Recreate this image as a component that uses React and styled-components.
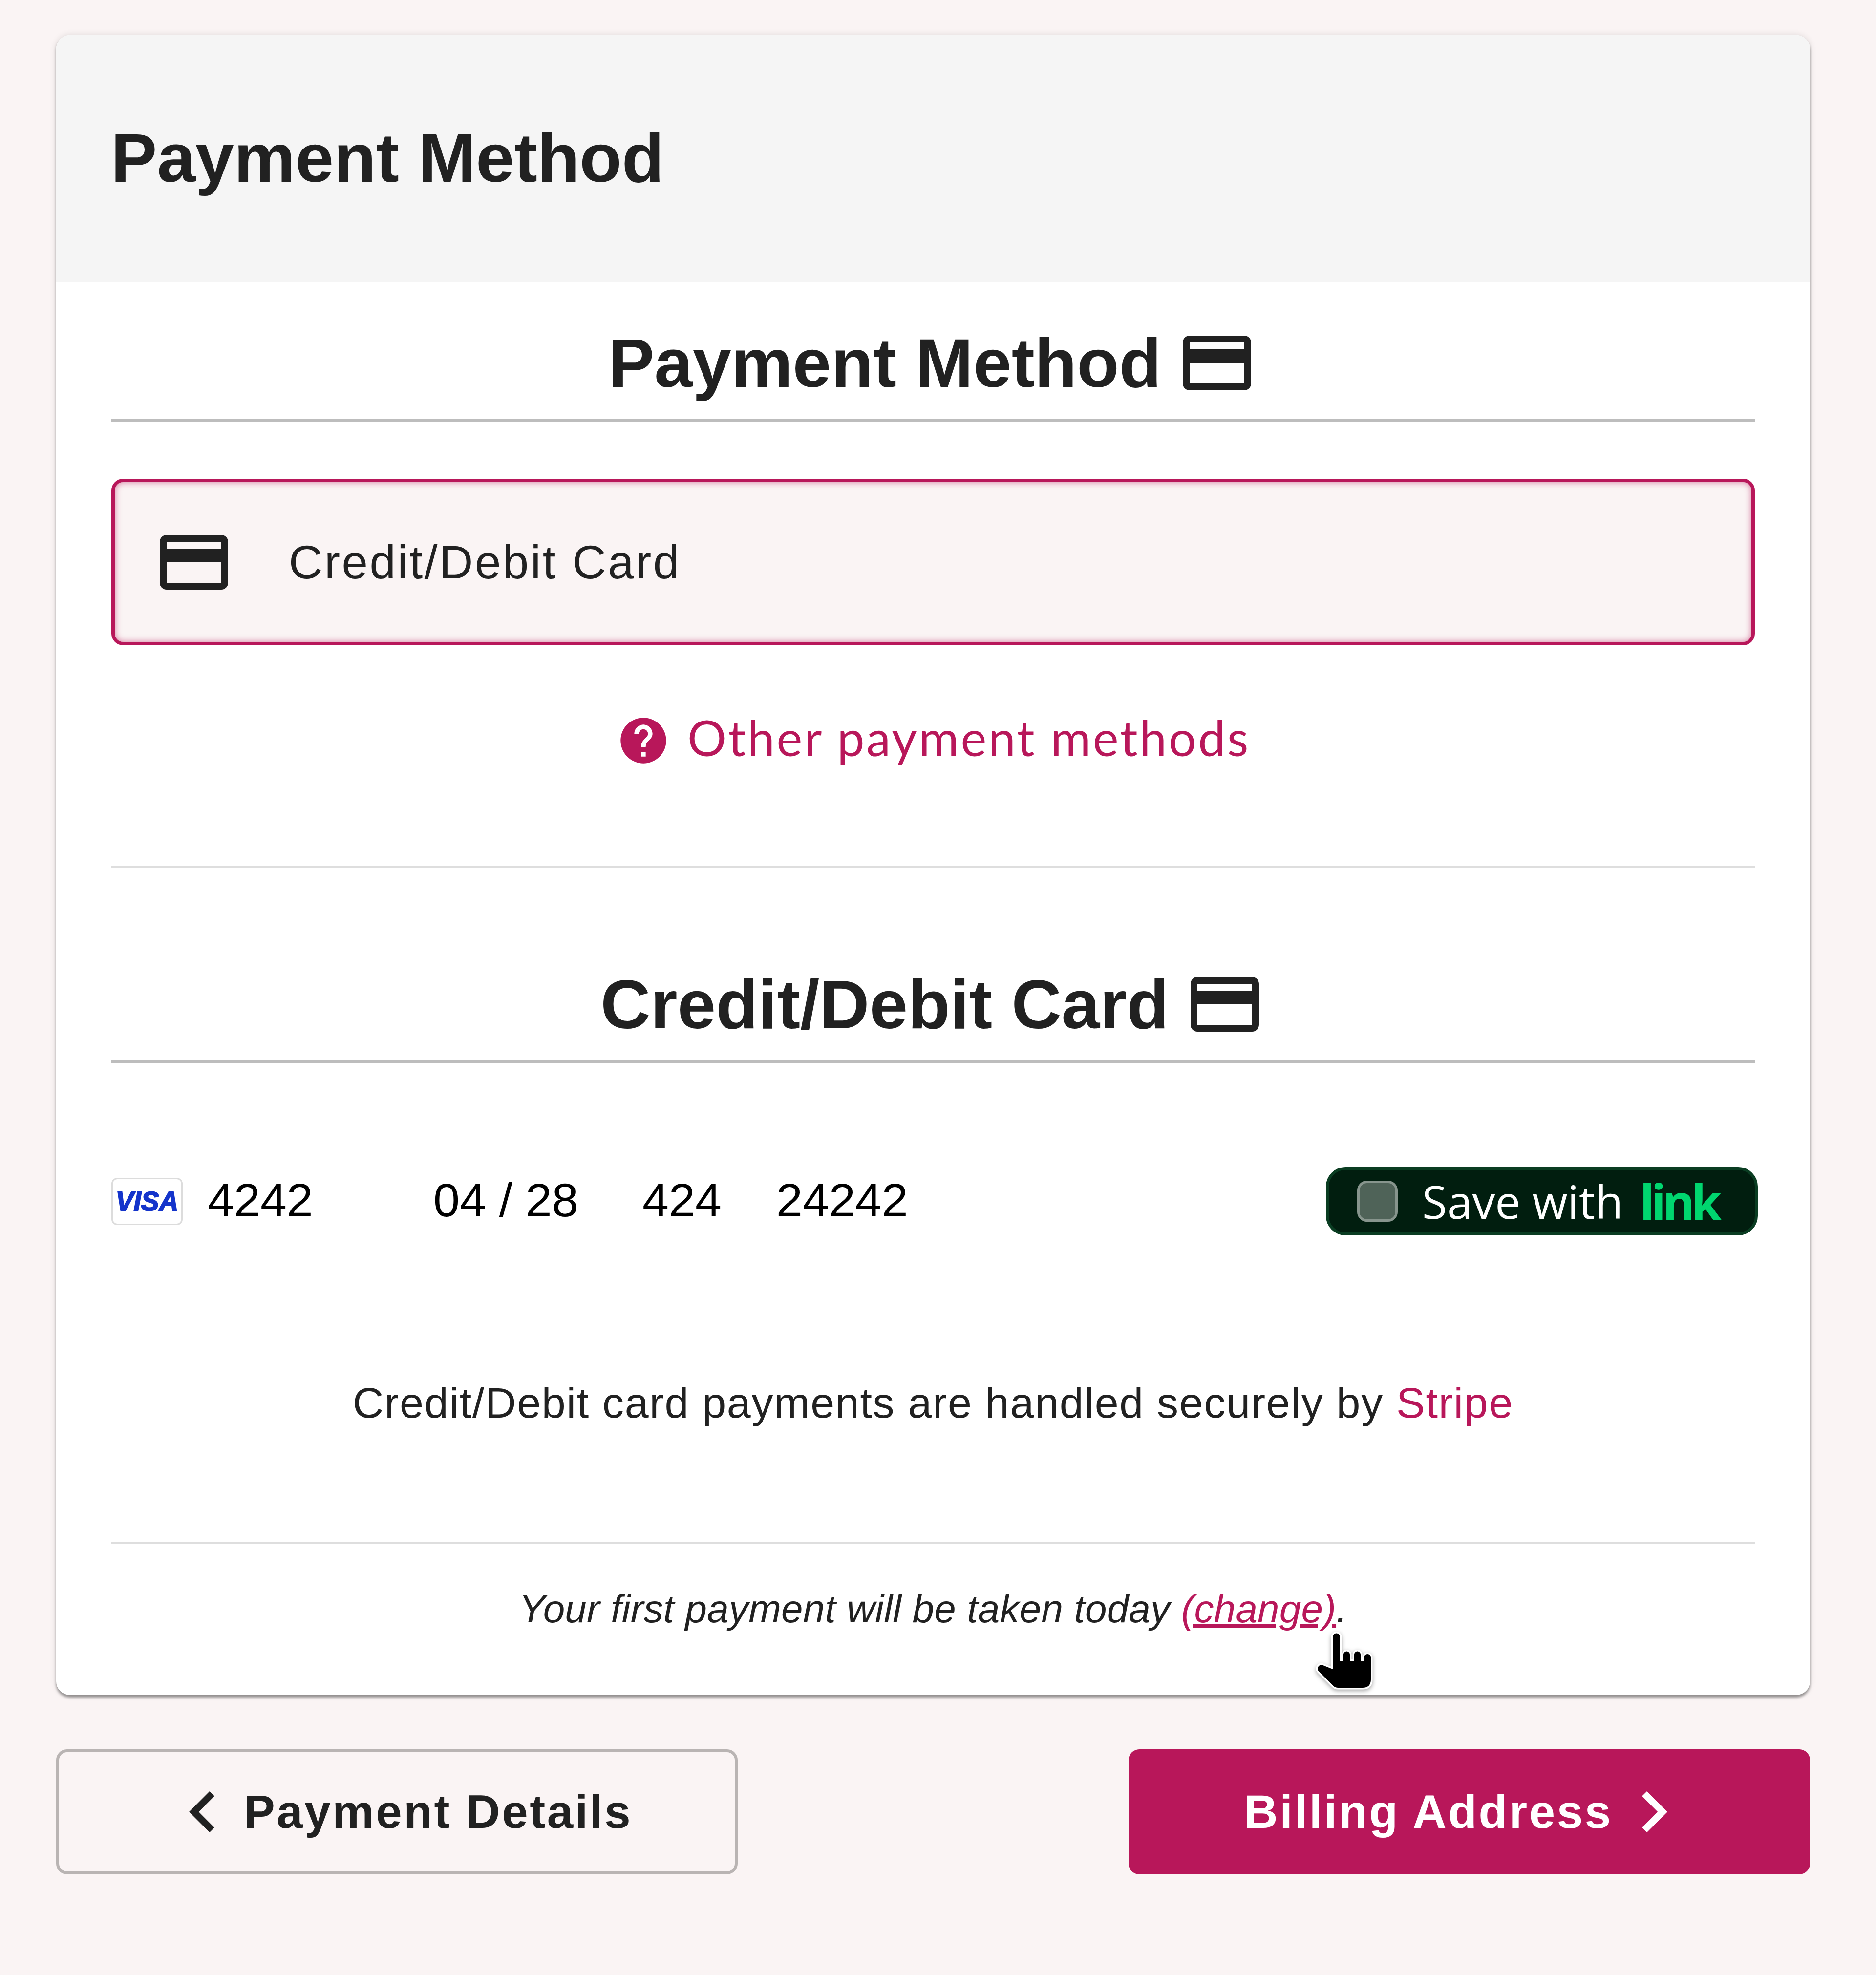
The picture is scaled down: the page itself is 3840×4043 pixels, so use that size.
import React from "react";
import styled, { createGlobalStyle } from "styled-components";

const GlobalStyle = createGlobalStyle`
  body {
    margin: 0;
    background: #faf4f4;
    color: #212121;
    font-family: "Liberation Sans", Arial, sans-serif;
  }
`;

const CARD_PATH =
  "M20 4H4c-1.11 0-1.99.89-1.99 2L2 18c0 1.11.89 2 2 2h16c1.11 0 2-.89 2-2V6c0-1.11-.89-2-2-2zm0 14H4v-6h16v6zm0-10H4V6h16v2z";
const HELP_PATH =
  "M12 2C6.48 2 2 6.48 2 12s4.48 10 10 10 10-4.48 10-10S17.52 2 12 2zm1 17h-2v-2h2v2zm2.07-7.75l-.9.92C13.45 12.9 13 13.5 13 15h-2v-.5c0-1.1.45-2.1 1.17-2.83l1.24-1.26c.37-.36.59-.86.59-1.41 0-1.1-.9-2-2-2s-2 .9-2 2H8c0-2.21 1.79-4 4-4s4 1.79 4 4c0 .88-.36 1.68-.93 2.25z";
const LEFT_PATH = "M15.41 7.41L14 6l-6 6 6 6 1.41-1.41L10.83 12z";
const RIGHT_PATH = "M10 6L8.59 7.41 13.17 12l-4.58 4.59L10 18l6-6z";
const HAND_PATH =
  "M35 74 V8 a7.5 7.5 0 0 1 15 0 V57 H57 V44 a6.5 6.5 0 0 1 13 0 V57 H79 V44 a6.5 6.5 0 0 1 13 0 V57 H99 V50 a7 7 0 0 1 14 0 V95 Q113 112 96 112 H46 Q40 112 36 108 L6 78 Q2 73 6 68 Q10 63 15 66 Z";

const Icon = ({ path, size = 168, color = "currentColor" }) => (
  <svg width={size} height={size} viewBox="0 0 24 24" fill={color} style={{ flexShrink: 0 }}>
    <path d={path} />
  </svg>
);

const App = () => {
  return (
    <Page>
      <GlobalStyle />
      <Card>
        <CardHeader>
          <Title>Payment Method</Title>
        </CardHeader>
        <CardBody>
          <SectionHeading $top={82}>
            Payment Method
            <Icon path={CARD_PATH} />
          </SectionHeading>

          <MethodOption>
            <Icon path={CARD_PATH} />
            <MethodLabel>Credit/Debit Card</MethodLabel>
          </MethodOption>

          <OtherMethods>
            <Icon path={HELP_PATH} size={112} />
            <OtherLabel>Other payment methods</OtherLabel>
          </OtherMethods>

          <Divider $top={200} />

          <SectionHeading $top={195}>
            Credit/Debit Card
            <Icon path={CARD_PATH} />
          </SectionHeading>

          <CardRow>
            <VisaBadge>VISA</VisaBadge>
            <CardField $width={462}>4242</CardField>
            <CardField $width={428}>04 / 28</CardField>
            <CardField $width={274}>424</CardField>
            <CardField>24242</CardField>
            <SaveWithLink>
              <SaveCheck />
              <span>Save with</span>
              <LinkWord>link</LinkWord>
            </SaveWithLink>
          </CardRow>

          <SecureNote>
            Credit/Debit card payments are handled securely by <Accent>Stripe</Accent>
          </SecureNote>

          <Divider $top={224} />

          <FirstPayment>
            Your first payment will be taken today <ChangeLink>(change)</ChangeLink>.
          </FirstPayment>
        </CardBody>
        <HandCursor viewBox="0 0 120 120" width="120" height="120">
          <path d={HAND_PATH} />
        </HandCursor>
      </Card>

      <Actions>
        <BackButton>
          <Icon path={LEFT_PATH} />
          Payment Details
        </BackButton>
        <NextButton>
          Billing Address
          <Icon path={RIGHT_PATH} />
        </NextButton>
      </Actions>
    </Page>
  );
};

export default App;

const Page = styled.div`
  box-sizing: border-box;
  width: 3840px;
  height: 4043px;
  padding: 72px 135px 0 115px;
`;

const Card = styled.div`
  position: relative;
  height: 3398px;
  background: #fff;
  border-radius: 28px;
  box-shadow: 0 5px 5px rgba(0, 0, 0, 0.38), 0 0 14px rgba(0, 0, 0, 0.12);
`;

const CardHeader = styled.div`
  box-sizing: border-box;
  height: 505px;
  display: flex;
  align-items: center;
  padding: 0 0 3px 112px;
  background: #f5f5f5;
  border-radius: 28px 28px 0 0;
`;

const Title = styled.h1`
  margin: 0;
  font-size: 141.5px;
  line-height: 168px;
  font-weight: 700;
`;

const CardBody = styled.div`
  padding: 0 113px;
`;

const SectionHeading = styled.h2`
  margin: ${(p) => p.$top}px 0 0;
  padding-bottom: 30px;
  display: flex;
  justify-content: center;
  align-items: center;
  gap: 30px;
  font-size: 141.5px;
  line-height: 168px;
  font-weight: 700;
  border-bottom: 6px solid #bdbdbd;
`;

const MethodOption = styled.div`
  box-sizing: border-box;
  height: 341px;
  margin-top: 117px;
  padding-left: 78px;
  display: flex;
  align-items: center;
  gap: 110px;
  background: #faf4f4;
  border: 7px solid #b8175a;
  border-radius: 24px;
  box-shadow: inset 0 0 14px rgba(184, 23, 90, 0.55);
`;

const MethodLabel = styled.span`
  font-size: 96px;
  letter-spacing: 3.6px;
`;

const OtherMethods = styled.div`
  margin-top: 139px;
  height: 112px;
  display: flex;
  justify-content: center;
  align-items: center;
  gap: 34px;
  color: #b8175a;
  font-family: Lato, sans-serif;
  font-size: 100px;
  letter-spacing: 3.7px;
`;

const OtherLabel = styled.span`
  padding-bottom: 14px;
`;

const Divider = styled.div`
  margin-top: ${(p) => p.$top}px;
  height: 5px;
  background: #dedede;
`;

const CardRow = styled.div`
  margin: 213px -6px 0 0;
  height: 140px;
  display: flex;
  align-items: center;
`;

const VisaBadge = styled.div`
  box-sizing: border-box;
  width: 146px;
  height: 97px;
  margin-right: 51px;
  display: flex;
  justify-content: center;
  align-items: center;
  color: #1434cb;
  font-size: 55px;
  font-weight: 700;
  font-style: italic;
  -webkit-text-stroke: 2px #1434cb;
  border: 3px solid #dcdcdc;
  border-radius: 12px;
`;

const CardField = styled.div`
  width: ${(p) => (p.$width ? `${p.$width}px` : "auto")};
  padding-bottom: 4px;
  color: #000;
  font-size: 97px;
  line-height: 136px;
`;

const SaveWithLink = styled.div`
  box-sizing: border-box;
  width: 884px;
  height: 140px;
  margin-left: auto;
  padding-left: 58px;
  display: flex;
  align-items: center;
  color: #fff;
  font-family: "Open Sans", sans-serif;
  font-size: 93px;
  font-weight: 500;
  background: #011e0f;
  border: 6px solid #0a3d22;
  border-radius: 40px;
`;

const SaveCheck = styled.span`
  box-sizing: border-box;
  width: 83px;
  height: 84px;
  margin-right: 50px;
  background: #4f6358;
  border: 5px solid #87958d;
  border-radius: 20px;
`;

const LinkWord = styled.span`
  margin-left: 34px;
  color: #00d66f;
  font-size: 100px;
  font-weight: 700;
  letter-spacing: -7px;
`;

const SecureNote = styled.p`
  margin: 283px 0 0;
  text-align: center;
  font-size: 88px;
  line-height: 120px;
  letter-spacing: 1.7px;
`;

const Accent = styled.span`
  color: #b8175a;
`;

const FirstPayment = styled.p`
  margin: 78px 0 0;
  text-align: center;
  font-size: 80px;
  line-height: 110px;
  font-style: italic;
  letter-spacing: 0.2px;
`;

const ChangeLink = styled.span`
  color: #b8175a;
  text-decoration: underline;
`;

const HandCursor = styled.svg`
  position: absolute;
  left: 2578px;
  top: 3271px;
  overflow: visible;
  fill: #000;
  stroke: #fff;
  stroke-width: 7px;
  stroke-linejoin: round;
  paint-order: stroke;
  filter: drop-shadow(0 3px 4px rgba(0, 0, 0, 0.35));
`;

const Actions = styled.div`
  margin-top: 111px;
  display: flex;
  justify-content: space-between;
`;

const BackButton = styled.button`
  box-sizing: border-box;
  width: 1395px;
  height: 256px;
  display: flex;
  justify-content: center;
  align-items: center;
  color: #212121;
  font-family: inherit;
  font-size: 96px;
  font-weight: 700;
  letter-spacing: 3.6px;
  background: transparent;
  border: 6px solid #b9b4b3;
  border-radius: 22px;
`;

const NextButton = styled(BackButton)`
  color: #fff;
  background: #b8175a;
  border: none;
`;
